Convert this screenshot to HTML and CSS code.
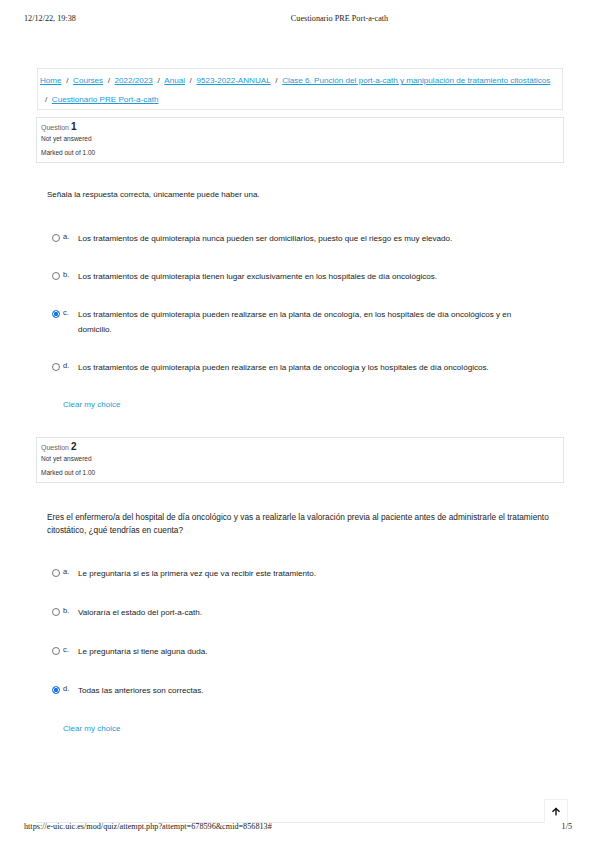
FILE: index.html
```html
<!DOCTYPE html>
<html lang="es">
<head>
<meta charset="utf-8">
<title>Cuestionario PRE Port-a-cath</title>
<link rel="stylesheet" href="styles.css">
</head>
<body>
<header class="print-head">
  <span class="print-date">12/12/22, 19:38</span>
  <span class="print-title">Cuestionario PRE Port-a-cath</span>
</header>

<main class="page">
  <nav class="breadcrumb">
    <a href="#">Home</a><span class="sep">/</span><a href="#">Courses</a><span class="sep">/</span><a href="#">2022/2023</a><span class="sep">/</span><a href="#">Anual</a><span class="sep">/</span><a href="#">9523-2022-ANNUAL</a><span class="sep">/</span><a href="#">Clase 6. Punción del port-a-cath y manipulación de tratamiento citostáticos</a><br><span class="sep first">/</span><a href="#">Cuestionario PRE Port-a-cath</a>
  </nav>

  <section class="question q1">
    <div class="info">
      <div class="qno">Question <b>1</b></div>
      <div class="state">Not yet answered</div>
      <div class="grade">Marked out of 1.00</div>
    </div>
    <div class="qtext">Señala la respuesta correcta, únicamente puede haber una.</div>
    <div class="answers">
      <div class="opt"><span class="radio"></span><span class="letter">a.</span><span class="txt">Los tratamientos de quimioterapia nunca pueden ser domiciliarios, puesto que el riesgo es muy elevado.</span></div>
      <div class="opt"><span class="radio"></span><span class="letter">b.</span><span class="txt">Los tratamientos de quimioterapia tienen lugar exclusivamente en los hospitales de día oncológicos.</span></div>
      <div class="opt"><span class="radio checked"></span><span class="letter">c.</span><span class="txt">Los tratamientos de quimioterapia pueden realizarse en la planta de oncología, en los hospitales de día oncológicos y en domicilio.</span></div>
      <div class="opt"><span class="radio"></span><span class="letter">d.</span><span class="txt">Los tratamientos de quimioterapia pueden realizarse en la planta de oncología y los hospitales de día oncológicos.</span></div>
    </div>
    <a class="clear" href="#">Clear my choice</a>
  </section>

  <section class="question q2">
    <div class="info">
      <div class="qno">Question <b>2</b></div>
      <div class="state">Not yet answered</div>
      <div class="grade">Marked out of 1.00</div>
    </div>
    <div class="qtext">Eres el enfermero/a del hospital de día oncológico y vas a realizarle la valoración previa al paciente antes de administrarle el tratamiento citostático, ¿qué tendrías en cuenta?</div>
    <div class="answers">
      <div class="opt"><span class="radio"></span><span class="letter">a.</span><span class="txt">Le preguntaría si es la primera vez que va recibir este tratamiento.</span></div>
      <div class="opt"><span class="radio"></span><span class="letter">b.</span><span class="txt">Valoraría el estado del port-a-cath.</span></div>
      <div class="opt"><span class="radio"></span><span class="letter">c.</span><span class="txt">Le preguntaría si tiene alguna duda.</span></div>
      <div class="opt"><span class="radio checked"></span><span class="letter">d.</span><span class="txt">Todas las anteriores son correctas.</span></div>
    </div>
    <a class="clear" href="#">Clear my choice</a>
  </section>

  <div class="page-end">
    <span class="to-top"><svg viewBox="0 0 448 512" width="8" height="9"><path d="M34.9 289.5l-22.2-22.2c-9.4-9.4-9.4-24.6 0-33.9L207 39c9.4-9.4 24.6-9.4 33.9 0l194.3 194.3c9.4 9.4 9.4 24.6 0 33.9L413 289.4c-9.5 9.5-25 9.3-34.3-.4L264 168.6V456c0 13.3-10.7 24-24 24h-32c-13.3 0-24-10.7-24-24V168.6L69.2 289.1c-9.3 9.8-24.8 10-34.3.4z" fill="#111"/></svg></span>
  </div>
</main>

<footer class="print-foot">
  <span>https://e-uic.uic.es/mod/quiz/attempt.php?attempt=678596&amp;cmid=856813#</span>
  <span>1/5</span>
</footer>
</body>
</html>
```

FILE: styles.css
```css
* { box-sizing: border-box; }

html, body {
  margin: 0;
  padding: 0;
  background: #fff;
}

body {
  width: 600px;
  height: 848px;
  font-family: "Liberation Sans", Arial, sans-serif;
  color: #1d2125;
  position: relative;
  overflow: hidden;
}

.print-head {
  display: flex;
  height: 68px;
  padding: 14px 0 0 24px;
  font-family: "Liberation Serif", "Times New Roman", serif;
  font-size: 8.2px;
  color: #222;
  line-height: 10px;
}

.print-title {
  margin-left: 215px;
}

.page {
  padding: 0 36px;
}

a {
  color: #1b9bd7;
}

.breadcrumb {
  border: 1.5px solid #e4e6e8;
  margin: 0 1px;
  padding: 2px 2px;
  font-size: 8.1px;
  line-height: 19px;
  height: 42px;
}

.breadcrumb a {
  text-decoration: underline;
}

.sep {
  color: #444;
  margin: 0 4.6px;
}

.sep.first {
  margin-left: 5px;
}

.info {
  margin-top: 7px;
  border: 1.5px solid #e2e4e6;
  height: 46px;
  padding: 3px 4px 0 4px;
  font-size: 6.5px;
  line-height: 12px;
  color: #333;
}

.info .qno {
  color: #666;
  font-size: 7px;
  height: 12px;
}

.info .qno b {
  font-size: 10px;
  color: #1d2125;
}

.info .state {
  height: 14px;
}

.qtext {
  margin-top: 25px;
  padding-left: 11px;
  font-size: 8px;
  line-height: 14px;
  color: #222;
}

.answers {
  margin-top: 29px;
  padding-left: 16px;
}

.opt {
  display: flex;
  align-items: flex-start;
  font-size: 8.1px;
  line-height: 15px;
  color: #222;
  margin-bottom: 23px;
}

.opt:last-child {
  margin-bottom: 0;
}

.radio {
  flex: none;
  width: 8px;
  height: 8px;
  border: 1px solid #767676;
  border-radius: 50%;
  margin-top: 3px;
  background: #fff;
}

.radio.checked {
  border-color: #1a73e8;
  background: radial-gradient(circle, #1a73e8 0 2px, #fff 2.3px 2.8px, #1a73e8 3px);
}

.letter {
  flex: none;
  width: 15px;
  margin-left: 3px;
  font-size: 7.5px;
  line-height: 11px;
  color: #333;
}

.txt {
  flex: 1;
  padding-right: 46px;
}

.clear {
  display: block;
  margin-left: 27px;
  margin-top: 22px;
  font-size: 8px;
  line-height: 15px;
  text-decoration: none;
}

.q2 .info {
  margin-top: 25px;
}

.q2 .qtext {
  margin-top: 28px;
  font-size: 8.3px;
  line-height: 13px;
  padding-right: 8px;
}

.q2 .answers {
  margin-top: 29px;
}

.q2 .opt {
  margin-bottom: 24px;
}

.q2 .opt:last-child {
  margin-bottom: 0;
}

.q2 .clear {
  margin-top: 23px;
}

.page-end {
  position: absolute;
  left: 36px;
  right: 32px;
  top: 799px;
  height: 24px;
  border-bottom: 1px solid #e6e6e6;
}

.to-top {
  position: absolute;
  right: 0;
  top: 0;
  width: 24px;
  height: 24px;
  border: 1px solid #f0f0f0;
  border-bottom: none;
  display: flex;
  align-items: center;
  justify-content: center;
  background: #fff;
}

.print-foot {
  position: absolute;
  left: 24px;
  right: 28px;
  top: 822px;
  display: flex;
  justify-content: space-between;
  font-family: "Liberation Serif", "Times New Roman", serif;
  font-size: 8.2px;
  line-height: 10px;
  color: #222;
}
```
